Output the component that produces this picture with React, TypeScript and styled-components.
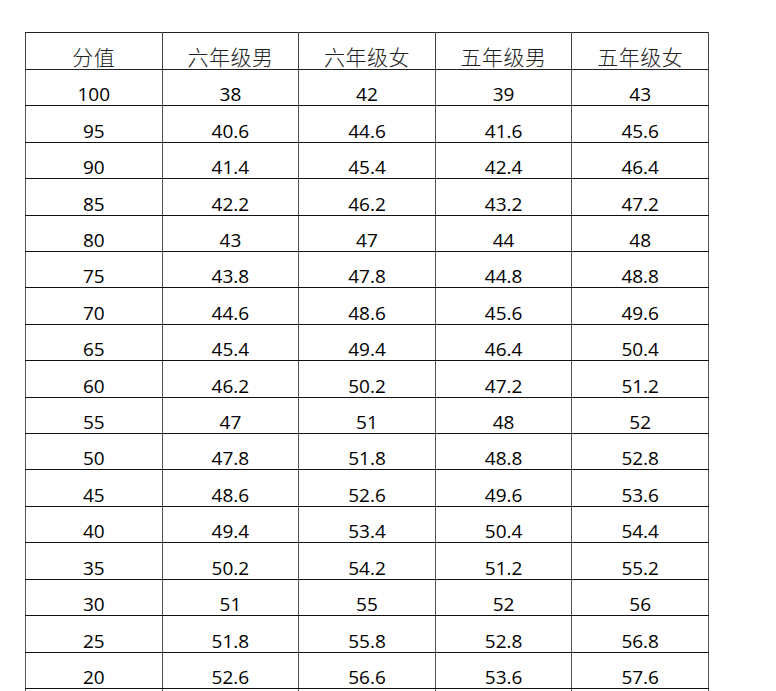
import React from "react";
import styled, { createGlobalStyle } from "styled-components";

const Global = createGlobalStyle`
  html, body { margin: 0; padding: 0; background: #fff; }
  body { overflow: hidden; height: 691px; }
`;

const Page = styled.div`
  padding: 32px 0 0 25px;
  height: 691px;
  box-sizing: border-box;
  overflow: hidden;
`;

const Table = styled.table`
  border-collapse: collapse;
  table-layout: fixed;
  width: 684px;
`;

const Col = styled.col`
  width: 136.6px;
`;

const HeadCell = styled.th`
  border: 1px solid #222;
  border-left-color: #444;
  border-right-color: #444;
  height: 35px;
  padding: 0 0 1px;
  vertical-align: bottom;
  text-align: center;
  font-family: "Noto Sans CJK SC", "Noto Sans", sans-serif;
  font-weight: 300;
  font-size: 21px;
  line-height: 24px;
  color: #222;
  letter-spacing: 0.5px;
`;

const Cell = styled.td`
  border: 1px solid #111;
  border-left-color: #555;
  border-right-color: #555;
  height: 35.41px;
  padding: 0;
  vertical-align: bottom;
  text-align: center;
  font-family: "Open Sans", "Noto Sans", sans-serif;
  font-size: 19px;
  line-height: 21px;
  color: #000;
`;

const headers = ["分值", "六年级男", "六年级女", "五年级男", "五年级女"];

const rows: string[][] = [
  ["100", "38", "42", "39", "43"],
  ["95", "40.6", "44.6", "41.6", "45.6"],
  ["90", "41.4", "45.4", "42.4", "46.4"],
  ["85", "42.2", "46.2", "43.2", "47.2"],
  ["80", "43", "47", "44", "48"],
  ["75", "43.8", "47.8", "44.8", "48.8"],
  ["70", "44.6", "48.6", "45.6", "49.6"],
  ["65", "45.4", "49.4", "46.4", "50.4"],
  ["60", "46.2", "50.2", "47.2", "51.2"],
  ["55", "47", "51", "48", "52"],
  ["50", "47.8", "51.8", "48.8", "52.8"],
  ["45", "48.6", "52.6", "49.6", "53.6"],
  ["40", "49.4", "53.4", "50.4", "54.4"],
  ["35", "50.2", "54.2", "51.2", "55.2"],
  ["30", "51", "55", "52", "56"],
  ["25", "51.8", "55.8", "52.8", "56.8"],
  ["20", "52.6", "56.6", "53.6", "57.6"],
  ["", "", "", "", ""],
];

export default function App() {
  return (
    <Page>
      <Global />
      <Table>
        <colgroup>
          {headers.map((h) => (
            <Col key={h} />
          ))}
        </colgroup>
        <thead>
          <tr>
            {headers.map((h) => (
              <HeadCell key={h}>{h}</HeadCell>
            ))}
          </tr>
        </thead>
        <tbody>
          {rows.map((r, ri) => (
            <tr key={ri}>
              {r.map((v, i) => (
                <Cell key={i}>{v}</Cell>
              ))}
            </tr>
          ))}
        </tbody>
      </Table>
    </Page>
  );
}
